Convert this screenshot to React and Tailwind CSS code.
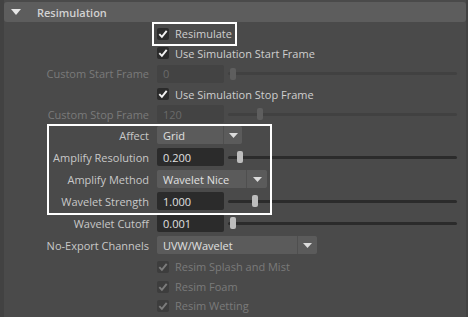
import React from "react";

const font = { fontFamily: '"Open Sans", "Liberation Sans", sans-serif' };

function Check({ disabled }) {
  return (
    <div className={`w-[12px] h-[12px] rounded-[2px] flex items-center justify-center ${disabled ? "bg-[#3d3d3d]" : "bg-[#2b2b2b]"}`}>
      <svg width="10" height="10" viewBox="0 0 10 10">
        <path d="M1.3 5.2 L3.9 7.9 L8.7 1.8" fill="none" stroke={disabled ? "#7c7c7c" : "#f2f2f2"} strokeWidth="1.9" />
      </svg>
    </div>
  );
}

function Label({ children, disabled }) {
  return (
    <div className={`w-[145px] shrink-0 text-right ${disabled ? "text-[#7a7a7a]" : "text-[#c8c8c8]"}`}>{children}</div>
  );
}

function CheckRow({ label, h, disabled }) {
  return (
    <div className={`flex items-center ${h}`}>
      <div className="w-[153px] shrink-0" />
      <Check disabled={disabled} />
      <div className={`ml-[6px] ${disabled ? "text-[#7a7a7a]" : "text-[#cfcfcf]"}`}>{label}</div>
    </div>
  );
}

function Slider({ handle, disabled }) {
  return (
    <div className="relative ml-[4px] w-[229px] h-[18px] flex items-center">
      <div className={`w-full h-[3px] rounded-full ${disabled ? "bg-[#414141]" : "bg-[#2b2b2b]"}`} />
      <div
        className={`absolute top-[3px] w-[6px] h-[12px] rounded-[2px] ${disabled ? "bg-[#5e5e5e]" : "bg-[#bdbdbd]"}`}
        style={{ left: handle - 228 }}
      />
    </div>
  );
}

function FieldRow({ label, value, handle, disabled, h = "h-[22px]" }) {
  return (
    <div className={`flex items-center ${h}`}>
      <Label disabled={disabled}>{label}</Label>
      <div
        className={`ml-[8px] w-[67px] h-[18px] rounded-[2px] flex items-center pl-[6px] ${disabled ? "bg-[#434343] text-[#6a6a6a]" : "bg-[#2b2b2b] text-[#e0e0e0]"}`}
      >
        {value}
      </div>
      <Slider handle={handle} disabled={disabled} />
    </div>
  );
}

function Arrow() {
  return (
    <svg width="9" height="5" viewBox="0 0 9 5">
      <path d="M0 0 L9 0 L4.5 5 Z" fill="#dcdcdc" />
    </svg>
  );
}

function DropRow({ label, value, mainW, arrowW }) {
  return (
    <div className="flex items-center h-[22px]">
      <Label>{label}</Label>
      <div className="ml-[8px] flex h-[18px] bg-[#4f4f4f] rounded-[2px] gap-[1px]">
        <div className={`${mainW} h-full bg-[#5b5b5b] rounded-l-[2px] flex items-center pl-[6px] text-[#e0e0e0]`}>{value}</div>
        <div className={`${arrowW} h-full bg-[#5b5b5b] rounded-r-[2px] flex items-center justify-center`}>
          <Arrow />
        </div>
      </div>
    </div>
  );
}

export default function App() {
  return (
    <div className="relative w-[468px] h-[317px] bg-[#424242] overflow-hidden text-[11px] leading-none" style={font}>
      <div className="ml-[4px] w-[462px] h-full bg-[#4a4a4a] pt-[2px]">
        <div className="h-[20px] bg-[#5d5d5d] rounded-[3px] flex items-center">
          <div className="ml-[7px] w-[10px] flex">
            <svg width="10" height="6" viewBox="0 0 10 6">
              <path d="M0 0 L10 0 L5 6 Z" fill="#e6e6e6" />
            </svg>
          </div>
          <div className="ml-[16px] font-semibold text-[#d2d2d2]">Resimulation</div>
        </div>
        <div className="flex flex-col">
          <div className="h-[2px]" />
          <CheckRow label="Resimulate" h="h-[19px]" />
          <CheckRow label="Use Simulation Start Frame" h="h-[20px]" />
          <FieldRow label="Custom Start Frame" value="0" handle={230} disabled h="h-[21px]" />
          <CheckRow label="Use Simulation Stop Frame" h="h-[20px]" />
          <FieldRow label="Custom Stop Frame" value="120" handle={257} disabled h="h-[20px]" />
          <DropRow label="Affect" value="Grid" mainW="w-[66px]" arrowW="w-[18px]" />
          <FieldRow label="Amplify Resolution" value="0.200" handle={237} />
          <DropRow label="Amplify Method" value="Wavelet Nice" mainW="w-[89px]" arrowW="w-[20px]" />
          <FieldRow label="Wavelet Strength" value="1.000" handle={252} />
          <FieldRow label="Wavelet Cutoff" value="0.001" handle={230} />
          <DropRow label="No-Export Channels" value="UVW/Wavelet" mainW="w-[140px]" arrowW="w-[19px]" />
          <CheckRow label="Resim Splash and Mist" h="h-[21px]" disabled />
          <CheckRow label="Resim Foam" h="h-[19px]" disabled />
          <CheckRow label="Resim Wetting" h="h-[19px]" disabled />
        </div>
      </div>
      <div className="absolute left-[152px] top-[22px] w-[85px] h-[24px] border-2 border-white" />
      <div className="absolute left-[47px] top-[124px] w-[225px] h-[91px] border-2 border-white" />
    </div>
  );
}
